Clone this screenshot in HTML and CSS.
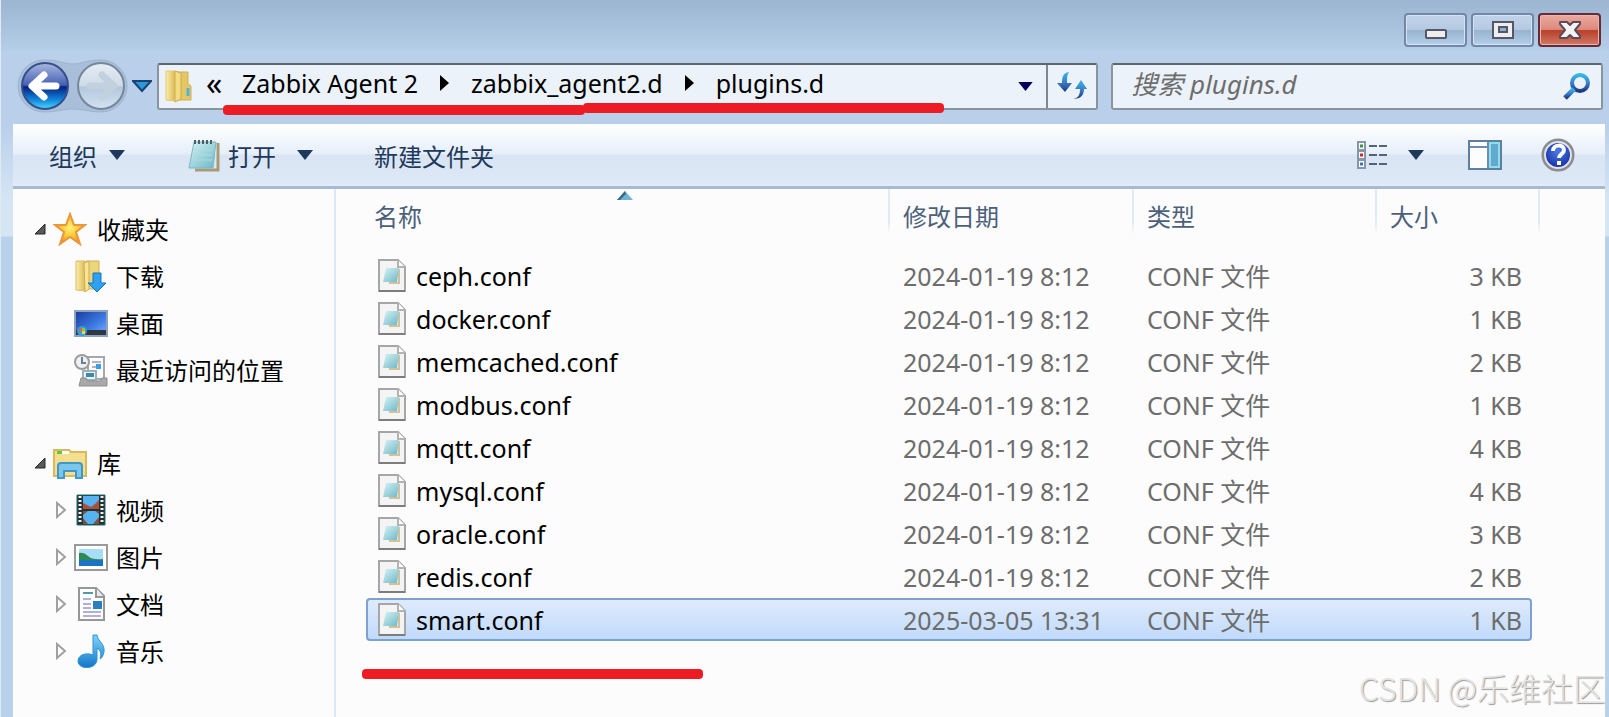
FILE: index.html
```html
<!DOCTYPE html>
<html lang="zh-CN">
<head>
    <meta charset="UTF-8">
    <title>plugins.d</title>
    <link rel="stylesheet" href="styles.css">
</head>
<body>
<!-- 公用图标 -->
<svg class="defs" aria-hidden="true">
    <defs>
        <linearGradient id="gBlue" x1="0" y1="0" x2="0" y2="1">
            <stop offset="0" stop-color="#a9b9e0"/><stop offset="0.48" stop-color="#4560b4"/>
            <stop offset="0.52" stop-color="#06207e"/><stop offset="0.8" stop-color="#1187dd"/>
            <stop offset="1" stop-color="#4bd8fb"/>
        </linearGradient>
        <linearGradient id="gGrey" x1="0" y1="0" x2="0" y2="1">
            <stop offset="0" stop-color="#e6edf5"/><stop offset="0.49" stop-color="#cfdbe8"/>
            <stop offset="0.52" stop-color="#b3c7dd"/><stop offset="1" stop-color="#d5e3f2"/>
        </linearGradient>
        <linearGradient id="gTool" x1="0" y1="0" x2="0" y2="1">
            <stop offset="0" stop-color="#35b8e4"/><stop offset="0.5" stop-color="#3c7fcb"/>
            <stop offset="1" stop-color="#1c3a80"/>
        </linearGradient>
        <linearGradient id="gFolder" x1="0" y1="0" x2="1" y2="0">
            <stop offset="0" stop-color="#fbeeaa"/><stop offset="1" stop-color="#dcb957"/>
        </linearGradient>
        <linearGradient id="gPaper" x1="0" y1="0" x2="1" y2="1">
            <stop offset="0" stop-color="#d8f3f5"/><stop offset="1" stop-color="#6cb6c6"/>
        </linearGradient>
        <linearGradient id="gSky" x1="0" y1="0" x2="0" y2="1">
            <stop offset="0" stop-color="#7fd4fb"/><stop offset="1" stop-color="#1176c8"/>
        </linearGradient>
        <linearGradient id="gDesk" x1="0" y1="0" x2="1" y2="1">
            <stop offset="0" stop-color="#173a9c"/><stop offset="0.6" stop-color="#3f7de4"/>
            <stop offset="1" stop-color="#7fb4fa"/>
        </linearGradient>
        <radialGradient id="gStar" cx="0.5" cy="0.45" r="0.55">
            <stop offset="0" stop-color="#fff27a"/><stop offset="0.6" stop-color="#fcc32c"/>
            <stop offset="1" stop-color="#ee8a2b"/>
        </radialGradient>
        <radialGradient id="gHelp" cx="0.5" cy="0.4" r="0.6">
            <stop offset="0" stop-color="#4b7ce6"/><stop offset="1" stop-color="#10259a"/>
        </radialGradient>
        <symbol id="down" viewBox="0 0 16 10"><path d="M0 0h16L8 10z"/></symbol>
        <symbol id="next" viewBox="0 0 9 16"><path d="M0 0v16l9-8z"/></symbol>
        <symbol id="opened" viewBox="0 0 12 12"><path d="M11 1v10H1z" fill="#595959" stroke="#262626"/></symbol>
        <symbol id="closed" viewBox="0 0 12 18"><path d="M2 2v14l8-7z" fill="#fff" stroke="#a0a0a0" stroke-width="2"/></symbol>
        <symbol id="file" viewBox="0 0 28 33">
            <path d="M1 1h19l7 7v24H1z" fill="#f4f4f4" stroke="#a6a6a6" stroke-width="2"/>
            <path d="M1 32h26" stroke="#7d7d7d" stroke-width="2"/>
            <path d="M20 1v7h7" fill="#fff" stroke="#b3b3b3" stroke-width="2"/>
            <path d="M11 24h10V10" fill="none" stroke="#cfc29c" stroke-width="2"/>
            <path d="M8 9h13l-2 14H5z" fill="url(#gPaper)"/>
        </symbol>
    </defs>
</svg>

<div class="window">
    <header class="titlebar">
        <button class="winbtn" aria-label="最小化">
            <svg width="24" height="24"><rect x="2" y="12" width="20" height="8" rx="1" fill="#eee" stroke="#55586b" stroke-width="2"/></svg>
        </button>
        <button class="winbtn" aria-label="最大化">
            <svg width="24" height="24"><path d="M2 4h20v16H2z" fill="#eee" stroke="#55586b" stroke-width="2"/><path d="M8 9h8v5H8z" fill="#93aecb" stroke="#55586b" stroke-width="2"/></svg>
        </button>
        <button class="winbtn close" aria-label="关闭">
            <svg width="24" height="24"><path d="M2 4h7l3 3 3-3h7v2l-5 6 5 6v2h-7l-3-3-3 3H2v-2l5-6-5-6z" fill="#f3f3f3" stroke="#5b4b5b" stroke-width="2" stroke-linejoin="round"/></svg>
        </button>
    </header>

    <nav class="navbar">
        <div class="navbtns">
            <svg class="navplate" width="112" height="54" aria-hidden="true">
                <path d="M27 1c16 0 20 4 29 4s13-4 28-4a26 26 0 0 1 0 52c-12 0-18-3-28-3s-16 3-29 3a26 26 0 0 1 0-52z" fill="#a9bfd9" stroke="#9db3ce"/>
            </svg>
            <button class="round" aria-label="后退">
                <svg width="50" height="50"><circle cx="25" cy="25" r="23" fill="url(#gBlue)" stroke="#344f8c" stroke-width="2"/><path d="M36 25H13M24 14L12 25l12 11" fill="none" stroke="#fff" stroke-width="7" stroke-linejoin="round" stroke-linecap="round"/></svg>
            </button>
            <button class="round" aria-label="前进">
                <svg width="50" height="50"><circle cx="25" cy="25" r="23" fill="url(#gGrey)" stroke="#76879b" stroke-width="2"/><path d="M14 25h23M26 14l12 11-12 11" fill="none" stroke="#c3d0de" stroke-width="7" stroke-linejoin="round" stroke-linecap="round"/></svg>
            </button>
        </div>
        <button class="history" aria-label="最近浏览"><svg width="20" height="14"><path d="M1 2h18l-9 10z" fill="#2b9bd6" stroke="#1b4276" stroke-width="2"/></svg></button>
        <div class="address">
            <svg class="folder" width="28" height="34">
                <path d="M12 3h12v12l3 2v14H12z" fill="#e4c765" stroke="#d2b052"/>
                <path d="M2 2h9v30l-9-1z" fill="url(#gFolder)" stroke="#e2c873"/>
                <path d="M11 2l6 2v26l-6 3z" fill="#f2dc84" stroke="#cfa94a"/>
                <path d="M24 19v8" stroke="#4fb4dc" stroke-width="3"/>
            </svg>
            <div class="path">
                <span class="more">«</span>
                <a href="#">Zabbix Agent 2</a>
                <svg width="9" height="16"><use href="#next"/></svg>
                <a href="#">zabbix_agent2.d</a>
                <svg width="9" height="16"><use href="#next"/></svg>
                <a href="#">plugins.d</a>
            </div>
            <button class="drop" aria-label="以前的位置"><svg width="15" height="9"><use href="#down"/></svg></button>
            <button class="refresh" aria-label="刷新">
                <svg width="30" height="30" fill="url(#gTool)"><path d="M12 1C6 2 5 6 5 12H0l8 9 7-9h-5c0-5 0-8 2-11z"/><path d="M16 28c6-1 7-5 7-10h-5l6-9 6 9h-3c0 6-3 10-11 10z"/></svg>
            </button>
            <div class="mark mark-a"></div>
            <div class="mark mark-b"></div>
        </div>
        <label class="search">
            <input type="search" placeholder="搜索 plugins.d" aria-label="搜索 plugins.d">
            <svg width="28" height="28" fill="none" stroke="url(#gTool)"><circle cx="17" cy="11" r="8" stroke-width="4"/><path d="M11 17l-9 9" stroke-width="5"/></svg>
        </label>
    </nav>

    <div class="toolbar">
        <button class="tool organize">组织<svg width="16" height="10"><use href="#down"/></svg></button>
        <button class="tool open">
            <svg class="note" width="34" height="34">
                <path d="M8 32h23V5" fill="none" stroke="#a89b76" stroke-width="3"/>
                <path d="M7 4h22l-3 26H2z" fill="url(#gPaper)" stroke="#7fb7c2"/>
                <path d="M8 2v4m4-4v4m4-4v4m4-4v4m4-4v4" stroke="#4d5f66" stroke-width="2"/>
                <path d="M7 12h19M6 17h19M5 22h20" stroke="#a9dce2"/>
            </svg>打开<svg class="gap" width="16" height="10"><use href="#down"/></svg>
        </button>
        <button class="tool create">新建文件夹</button>
        <button class="tool views" aria-label="更改视图">
            <svg width="31" height="28">
                <path d="M1 1h7v8H1zM1 10h7v8H1zM1 19h7v8H1z" fill="#fff" stroke="#8797aa" stroke-width="2"/>
                <path d="M3 5h3" stroke="#3d9142" stroke-width="3"/><path d="M3 14h3" stroke="#d22" stroke-width="3"/><path d="M3 23h3" stroke="#3a72c8" stroke-width="3"/>
                <path d="M12 5h8m2 0h8M12 14h8m2 0h8M12 23h8m2 0h8" stroke="#51647b" stroke-width="2"/>
            </svg>
            <svg width="16" height="10"><use href="#down"/></svg>
        </button>
        <button class="tool pane" aria-label="预览窗格">
            <svg width="34" height="30"><path d="M1 1h32v28H1z" fill="#fdfdfd" stroke="#5f7f9f" stroke-width="2"/><path d="M2 7h18M20 2v26" stroke="#6f8eae" stroke-width="2"/><path d="M22 3h9v24h-9z" fill="#62a8cf" stroke="#8be0ee" stroke-width="2"/></svg>
        </button>
        <button class="tool help" aria-label="帮助">
            <svg width="34" height="34"><circle cx="17" cy="17" r="15" fill="url(#gHelp)" stroke="#8c8c8c" stroke-width="3"/><circle cx="17" cy="17" r="13" fill="none" stroke="#dfe3ec" stroke-width="2"/><path d="M12 13c0-7 11-7 11-1 0 4-5 4-5 8" fill="none" stroke="#fff" stroke-width="4"/><path d="M16 23h4v4h-4z" fill="#fff"/></svg>
        </button>
    </div>

    <div class="body">
        <aside class="sidebar">
            <ul class="tree">
                <li class="root">
                    <svg width="12" height="12"><use href="#opened"/></svg>
                    <svg class="ico" width="34" height="34"><path d="M17 2l4 11h11l-9 7 4 12-10-7-10 7 4-12-9-7h11z" fill="url(#gStar)" stroke="#e9963c" stroke-width="2"/></svg>
                    <a href="#">收藏夹</a>
                </li>
                <li>
                    <svg class="ico" width="34" height="34">
                        <path d="M12 2h13v28H12z" fill="#ecd67c" stroke="#d2b052"/><path d="M2 2h9v30l-9-1z" fill="url(#gFolder)" stroke="#d9bd66"/><path d="M10 4l5-2v28l-4 3z" fill="#f6e596" stroke="#cfac50"/>
                        <path d="M19 14h8v10h5l-9 9-9-9h5z" fill="#2da2f2" stroke="#1b73c0"/>
                    </svg>
                    <a href="#">下载</a>
                </li>
                <li>
                    <svg class="ico" width="34" height="34">
                        <path d="M1 5h32v25H1z" fill="url(#gDesk)" stroke="#8fa3bd" stroke-width="2"/><path d="M2 24h30v5H2z" fill="#2f3744"/>
                        <circle cx="8" cy="25" r="5" fill="#2f9fe0"/><path d="M5 22h3v3H5z" fill="#e8632e"/><path d="M8 22h3v3H8z" fill="#8dc63f"/><path d="M8 25h3v3H8z" fill="#fbd13f"/>
                    </svg>
                    <a href="#">桌面</a>
                </li>
                <li>
                    <svg class="ico" width="34" height="34">
                        <path d="M14 4h16v22H14z" fill="#fdfdfd" stroke="#a8a8a8" stroke-width="2"/><path d="M18 9h9M18 14h4" stroke="#a9b6c4" stroke-width="2"/><path d="M22 11h5v5h-5z" fill="#3f9bea"/>
                        <path d="M9 18h13v9H9z" fill="#e9f4f8" stroke="#9db0bc" stroke-width="2"/><path d="M12 20h8v4h-8z" fill="#3b8ba8"/>
                        <path d="M7 25h5l2 3h12l2-3h5v8H5z" fill="#a9a9a9" stroke="#8f8f8f"/>
                        <circle cx="8" cy="9" r="7" fill="#eef1f4" stroke="#9c9c9c" stroke-width="2"/><path d="M8 4v6h4" fill="none" stroke="#6f7f92" stroke-width="2"/>
                    </svg>
                    <a href="#">最近访问的位置</a>
                </li>
            </ul>
            <ul class="tree">
                <li class="root">
                    <svg width="12" height="12"><use href="#opened"/></svg>
                    <svg class="ico" width="34" height="34">
                        <path d="M1 4h15l2 2h15v24H1z" fill="#f3df8d" stroke="#d8b95c" stroke-width="2"/><path d="M4 5h12v3H4z" fill="#fff"/><path d="M4 5h5v3H4z" fill="#5ec93a"/>
                        <path d="M5 32V20q0-3 3-3h18q3 0 3 3v12h-6v-7H11v7z" fill="#7cc6ec" stroke="#3f97cc" stroke-width="2"/>
                    </svg>
                    <a href="#">库</a>
                </li>
                <li>
                    <svg class="arrow" width="12" height="18"><use href="#closed"/></svg>
                    <svg class="ico" width="34" height="34">
                        <path d="M3 2h28v30H3z" fill="#263133" stroke="#1f6f72"/><path d="M9 3h16v13H9z" fill="#57b2f2"/><path d="M9 18h16v13H9z" fill="#57b2f2"/>
                        <path d="M9 10l4 2 4 2 4-3 4-4v9H9z" fill="#a8503c"/><path d="M9 25l5 6H9zM25 24l-6 7h6zM9 18h5l-5 4zM25 18h-4l4 3z" fill="#80503f"/>
                        <path d="M6 3v28M28 3v28" stroke="#e9f1f1" stroke-width="3" stroke-dasharray="2 2"/>
                    </svg>
                    <a href="#">视频</a>
                </li>
                <li>
                    <svg class="arrow" width="12" height="18"><use href="#closed"/></svg>
                    <svg class="ico" width="34" height="34">
                        <path d="M1 5h32v25H1z" fill="#fff" stroke="#9a9a9a" stroke-width="2"/><path d="M5 9h24v17H5z" fill="#a9dcf7"/><path d="M5 13q5-1 9 3t15 3v2H5z" fill="#2c8a54"/><path d="M5 20h24v6H5z" fill="#1d73bd"/>
                    </svg>
                    <a href="#">图片</a>
                </li>
                <li>
                    <svg class="arrow" width="12" height="18"><use href="#closed"/></svg>
                    <svg class="ico" width="34" height="34">
                        <path d="M5 1h17l8 8v24H5z" fill="#fdfdfd" stroke="#979797" stroke-width="2"/><path d="M22 1v9h8" fill="#e9e9e9" stroke="#979797" stroke-width="2"/>
                        <path d="M9 6h10" stroke="#4f9aa5" stroke-width="2"/><path d="M9 12h8M9 17h8M9 21h8M9 25h18M9 29h18" stroke="#b0b0d8" stroke-width="2"/><path d="M19 14h9v8h-9z" fill="#2b7fc0"/>
                    </svg>
                    <a href="#">文档</a>
                </li>
                <li>
                    <svg class="arrow" width="12" height="18"><use href="#closed"/></svg>
                    <svg class="ico" width="34" height="34"><path d="M19 1h4c1 7 8 8 7 17-1 4-2 6-4 7 2-6 0-9-3-11v12c-1 10-19 10-19 1 0-6 8-9 15-6z" fill="url(#gSky)" stroke="#2f94d8"/></svg>
                    <a href="#">音乐</a>
                </li>
            </ul>
        </aside>

        <main class="content">
            <table class="files">
                <colgroup><col><col class="c-date"><col class="c-type"><col class="c-size"><col class="c-end"></colgroup>
                <thead>
                <tr>
                    <th class="name">名称<svg class="sort" width="16" height="9"><path d="M8 0l8 9H0z" fill="#6fb4d6"/><path d="M8 0L0 9h3l6-6z" fill="#3c6a86"/></svg></th>
                    <th>修改日期</th><th>类型</th><th colspan="2">大小</th>
                </tr>
                </thead>
                <tbody>
                <tr><td><svg width="28" height="33"><use href="#file"/></svg>ceph.conf</td><td>2024-01-19 8:12</td><td>CONF 文件</td><td class="size">3 KB</td></tr>
                <tr><td><svg width="28" height="33"><use href="#file"/></svg>docker.conf</td><td>2024-01-19 8:12</td><td>CONF 文件</td><td class="size">1 KB</td></tr>
                <tr><td><svg width="28" height="33"><use href="#file"/></svg>memcached.conf</td><td>2024-01-19 8:12</td><td>CONF 文件</td><td class="size">2 KB</td></tr>
                <tr><td><svg width="28" height="33"><use href="#file"/></svg>modbus.conf</td><td>2024-01-19 8:12</td><td>CONF 文件</td><td class="size">1 KB</td></tr>
                <tr><td><svg width="28" height="33"><use href="#file"/></svg>mqtt.conf</td><td>2024-01-19 8:12</td><td>CONF 文件</td><td class="size">4 KB</td></tr>
                <tr><td><svg width="28" height="33"><use href="#file"/></svg>mysql.conf</td><td>2024-01-19 8:12</td><td>CONF 文件</td><td class="size">4 KB</td></tr>
                <tr><td><svg width="28" height="33"><use href="#file"/></svg>oracle.conf</td><td>2024-01-19 8:12</td><td>CONF 文件</td><td class="size">3 KB</td></tr>
                <tr><td><svg width="28" height="33"><use href="#file"/></svg>redis.conf</td><td>2024-01-19 8:12</td><td>CONF 文件</td><td class="size">2 KB</td></tr>
                <tr class="selected"><td><svg width="28" height="33"><use href="#file"/></svg>smart.conf</td><td>2025-03-05 13:31</td><td>CONF 文件</td><td class="size">1 KB</td></tr>
                </tbody>
            </table>
            <div class="mark mark-c"></div>
            <div class="watermark">CSDN @乐维社区</div>
        </main>
    </div>
</div>
</body>
</html>
```
FILE: styles.css
```css
*{
    box-sizing: border-box;
}
body{
    margin: 0;
    font-family: "Noto Sans", "Noto Sans CJK SC", sans-serif;
    font-size: 24px;
    color: #000;
}
a{
    color: inherit;
    text-decoration: none;
}
button{
    padding: 0;
    border: 0;
    background: none;
    font: inherit;
    color: inherit;
}
svg{
    display: block;
    flex: none;
}
.defs{
    position: absolute;
    width: 0;
    height: 0;
}
.window{
    display: flex;
    flex-direction: column;
    min-height: 100vh;
    padding: 0 4px 0 12px;
    border-left: 1px solid #dfeaf3;
    background: linear-gradient(#9bb5d2 0, #b3cde6 48px, #b9cfea 52px, #b9cfea 124px, #d5e5f4 200px, #d5e5f4 236px, #b9d1ea 237px);
}

/* 标题栏 */
.titlebar{
    display: flex;
    justify-content: flex-end;
    gap: 4px;
    height: 60px;
    padding: 13px 4px 0 0;
}
.winbtn{
    display: flex;
    align-items: center;
    justify-content: center;
    width: 63px;
    height: 34px;
    border: 2px solid #7288a6;
    border-radius: 4px;
    background: linear-gradient(#c1d3e9 0, #b5cae2 48%, #98b3cf 52%, #b4cfe9 100%);
    box-shadow: inset 0 0 0 1px #d5e3f2;
}
.close{
    border-color: #652b3b;
    background: linear-gradient(#eaa9a0 0, #dd8a7d 48%, #b93f29 52%, #d07a66 100%);
    box-shadow: inset 0 0 0 1px #eab5ac;
}

/* 地址栏 */
.navbar{
    display: flex;
    align-items: center;
    height: 64px;
    padding: 0 2px 12px 4px;
}
.navbtns{
    position: relative;
    display: flex;
    gap: 6px;
    padding: 2px 3px;
}
.navplate{
    position: absolute;
    left: 0;
    top: 0;
}
.round{
    position: relative;
}
.history{
    margin: 0 5px 0 3px;
}
.address{
    position: relative;
    display: flex;
    flex: 1;
    align-items: center;
    height: 47px;
    padding-left: 5px;
    border: 2px solid #8a949e;
    border-top-color: #5d656d;
    border-radius: 3px;
    background: #ebf2fa;
    font-size: 25px;
}
.path{
    display: flex;
    align-items: center;
    gap: 22px;
    height: 100%;
    padding: 0 0 6px 14px;
    white-space: nowrap;
}
.more{
    width: 14px;
    font-size: 32px;
    line-height: 36px;
}
.drop{
    margin: 0 13px 0 auto;
}
.drop svg{
    fill: #00005c;
}
.refresh{
    display: flex;
    align-items: center;
    justify-content: center;
    align-self: stretch;
    width: 50px;
    border-left: 2px solid #80878f;
}
.search{
    display: flex;
    align-items: center;
    width: 31%;
    height: 47px;
    margin-left: 13px;
    padding: 0 10px 0 18px;
    border: 2px solid #8a949e;
    border-top-color: #5d656d;
    border-radius: 3px;
    background: #ebf2fa;
}
.search input{
    flex: 1;
    min-width: 0;
    padding: 0 0 4px;
    border: 0;
    outline: 0;
    background: none;
    font: italic 26px "Noto Sans", "Noto Sans CJK SC", sans-serif;
}
.search input::placeholder{
    color: #6d6d6d;
    opacity: 1;
}

/* 工具栏 */
.toolbar{
    display: flex;
    align-items: center;
    height: 65px;
    padding: 0 30px 0 36px;
    border-bottom: 3px solid #aab9d2;
    background: linear-gradient(#fff 0, #e6effa 48%, #dae5f4 50%, #dde8f6 94%, #e4eefa 100%);
    color: #1e395b;
}
.tool{
    display: flex;
    align-items: center;
    gap: 12px;
    fill: #1e395b;
}
.open{
    gap: 7px;
    margin-left: 62px;
}
.open .gap{
    margin-left: 14px;
}
.create{
    margin-left: 61px;
}
.views{
    gap: 20px;
    margin-left: auto;
}
.pane{
    margin-left: 44px;
}
.help{
    margin-left: 39px;
}

.body{
    display: flex;
    flex: 1;
    background: #fcfcfc;
}

/* 左侧导航 */
.sidebar{
    width: 323px;
    padding-top: 16px;
    border-right: 2px solid #dbe8f5;
}
.tree{
    margin: 0 0 46px;
    padding: 0;
    list-style: none;
}
.tree li{
    display: flex;
    align-items: center;
    height: 47px;
    padding-left: 61px;
}
.tree .root{
    padding-left: 21px;
}
.ico{
    margin-right: 8px;
}
.root .ico{
    margin: 0 10px 0 7px;
}
.arrow{
    margin: 0 7px 0 -19px;
}

/* 文件列表 */
.content{
    position: relative;
    flex: 1;
    padding: 0 65px 0 30px;
}
.files{
    width: 100%;
    table-layout: fixed;
    border-collapse: separate;
    border-spacing: 0;
}
.c-date{
    width: 244px;
}
.c-type{
    width: 243px;
}
.c-size{
    width: 155px;
}
.c-end{
    width: 8px;
}
.files th{
    height: 65px;
    padding: 0 0 12px 13px;
    border-right: 2px solid;
    border-image: linear-gradient(#dfeaf6 0, #dfeaf6 50%, transparent 70%) 1;
    font-weight: 400;
    text-align: left;
    color: #4c607a;
}
.files .name{
    position: relative;
    padding-left: 8px;
}
.sort{
    position: absolute;
    left: 48%;
    top: 2px;
}
.files td{
    height: 43px;
    padding: 0 0 0 13px;
    font-size: 25px;
    line-height: 34px;
    color: #6d6d6d;
}
.files td:first-child{
    display: flex;
    align-items: center;
    gap: 10px;
    padding-left: 12px;
    color: #000;
}
.files .size{
    padding-right: 10px;
    text-align: right;
}
.selected td{
    border: solid #7da2ce;
    border-width: 2px 0;
    background: linear-gradient(#dfebfc, #c0dafb);
}
.files .selected td:first-child{
    padding-left: 10px;
    border-left-width: 2px;
    border-radius: 4px 0 0 4px;
}
.files .selected .size{
    padding-right: 8px;
    border-right-width: 2px;
    border-radius: 0 4px 4px 0;
}

/* 红色标注线 */
.mark{
    position: absolute;
    height: 10px;
    border-radius: 4px;
    background: #ed1c24;
}
.mark-a{
    left: 64px;
    top: 40px;
    width: 362px;
}
.mark-b{
    left: 424px;
    top: 38px;
    width: 361px;
}
.mark-c{
    left: 26px;
    bottom: 41px;
    width: 341px;
}
.watermark{
    position: absolute;
    right: 0;
    bottom: 10px;
    font: 300 32px/46px "Noto Sans CJK SC", sans-serif;
    color: #e4e4e4;
    text-shadow: 1px 1px 1px #999;
}
```
